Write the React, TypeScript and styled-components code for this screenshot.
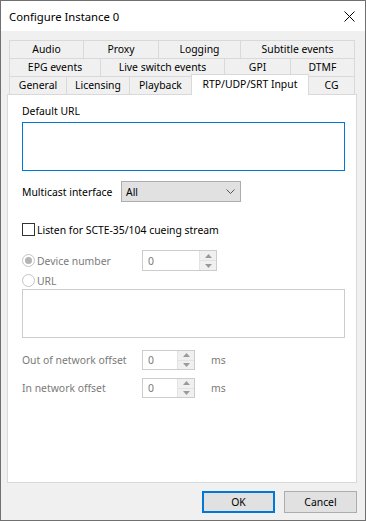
import React from 'react';
import styled, {createGlobalStyle, css} from 'styled-components';

const GlobalStyle = createGlobalStyle`
  html, body {
    margin: 0;
    padding: 0;
  }
  body {
    font-family: "Noto Sans", "Open Sans", sans-serif;
    font-size: 10.4px;
    color: #000;
    background: #fff;
  }
  * {
    box-sizing: border-box;
  }
`

interface TabDef {
    label: string
    width?: number
    active?: boolean
}

const tabRows: TabDef[][] = [
    [{label: 'Audio', width: 75}, {label: 'Proxy', width: 76}, {label: 'Logging', width: 83}, {label: 'Subtitle events'}],
    [{label: 'EPG events', width: 92}, {label: 'Live switch events', width: 125}, {label: 'GPI', width: 67}, {label: 'DTMF'}],
    [{label: 'General', width: 58}, {label: 'Licensing', width: 64}, {label: 'Playback', width: 63}, {label: 'RTP/UDP/SRT Input', width: 118, active: true}, {label: 'CG'}],
]

const SpinArrows = () => (
    <SpinButtons>
        <SpinHalf>
            <svg width="7" height="4" viewBox="0 0 7 4"><path d="M0 4 L3.5 0 L7 4 Z" fill="#9a9a9a"/></svg>
        </SpinHalf>
        <SpinHalf>
            <svg width="7" height="4" viewBox="0 0 7 4"><path d="M0 0 L3.5 4 L7 0 Z" fill="#9a9a9a"/></svg>
        </SpinHalf>
    </SpinButtons>
)

const App: React.FC = () => {
    return (
        <>
            <GlobalStyle/>
            <Window>
                <TitleBar>
                    <span>Configure Instance 0</span>
                    <svg width="11" height="11" viewBox="0 0 11 11">
                        <path d="M0.5 0.5 L10.5 10.5 M10.5 0.5 L0.5 10.5" stroke="#000" strokeWidth="1"/>
                    </svg>
                </TitleBar>
                <Body>
                    <TabStrip>
                        {tabRows.map((row, i) => (
                            <TabRow key={i}>
                                {row.map(t => (
                                    <Tab key={t.label} $width={t.width} $active={t.active}>{t.label}</Tab>
                                ))}
                            </TabRow>
                        ))}
                    </TabStrip>
                    <Panel>
                        <Label>Default URL</Label>
                        <TextBox $focused $gap={4}/>

                        <FieldRow $gap={10} $height={21}>
                            <FieldLabel $w={99}>Multicast interface</FieldLabel>
                            <Combo>
                                <span>All</span>
                                <svg width="9" height="5" viewBox="0 0 9 5">
                                    <path d="M0.5 0.5 L4.5 4.5 L8.5 0.5" stroke="#555" strokeWidth="1" fill="none"/>
                                </svg>
                            </Combo>
                        </FieldRow>

                        <FieldRow $gap={21} $height={13}>
                            <CheckBox/>
                            <OptionText>Listen for SCTE-35/104 cueing stream</OptionText>
                        </FieldRow>

                        <FieldRow $gap={14} $height={21}>
                            <FieldLabel $w={120} $disabled>
                                <Radio $checked/>
                                <OptionText $disabled>Device number</OptionText>
                            </FieldLabel>
                            <SpinBox $w={75}>
                                <SpinValue>0</SpinValue>
                                <SpinArrows/>
                            </SpinBox>
                        </FieldRow>

                        <FieldRow $gap={3} $height={13}>
                            <Radio/>
                            <OptionText $disabled>URL</OptionText>
                        </FieldRow>
                        <TextBox $gap={2}/>

                        <FieldRow $gap={12} $height={20}>
                            <FieldLabel $w={120} $disabled>Out of network offset</FieldLabel>
                            <SpinBox $w={53}>
                                <SpinValue>0</SpinValue>
                                <SpinArrows/>
                            </SpinBox>
                            <Unit>ms</Unit>
                        </FieldRow>

                        <FieldRow $gap={8} $height={20}>
                            <FieldLabel $w={120} $disabled>In network offset</FieldLabel>
                            <SpinBox $w={53}>
                                <SpinValue>0</SpinValue>
                                <SpinArrows/>
                            </SpinBox>
                            <Unit>ms</Unit>
                        </FieldRow>
                    </Panel>
                    <Footer>
                        <DialogButton $default>OK</DialogButton>
                        <DialogButton>Cancel</DialogButton>
                    </Footer>
                </Body>
            </Window>
        </>
    );
};

export default App;


const Window = styled.div`
  width: 366px;
  height: 521px;
  border: 1px solid #707070;
  display: flex;
  flex-direction: column;
  overflow: hidden;
`

const TitleBar = styled.div`
  height: 30px;
  flex: 0 0 30px;
  background: #fff;
  display: flex;
  align-items: center;
  justify-content: space-between;
  padding: 0 10px 0 8px;
  font-size: 11.3px;
`

const Body = styled.div`
  flex: 1;
  background: #f0f0f0;
  padding: 9px 8px 7px 6px;
  display: flex;
  flex-direction: column;
`

const TabStrip = styled.div`
  margin: 0 2px;
  display: flex;
  flex-direction: column;
`

const TabRow = styled.div`
  display: flex;
  height: 18px;
`

const Tab = styled.div<{$width?: number; $active?: boolean}>`
  flex: ${p => p.$width ? `0 0 ${p.$width}px` : '1 1 0'};
  height: 18px;
  margin-left: -1px;
  &:first-child {
    margin-left: 0;
  }
  border: 1px solid #d9d9d9;
  border-bottom: none;
  background: #f0f0f0;
  display: flex;
  align-items: center;
  justify-content: center;
  white-space: nowrap;
  padding-bottom: 1px;
  ${p => p.$active && css`
    position: relative;
    z-index: 1;
    margin-top: -2px;
    height: 21px;
    background: #fff;
    padding-bottom: 2px;
  `}
`

const Panel = styled.div`
  flex: 1;
  background: #fff;
  border: 1px solid #d9d9d9;
  padding: 9px 11px 0 14px;
  display: flex;
  flex-direction: column;
`

const Label = styled.div`
  height: 14px;
  line-height: 14px;
`

const TextBox = styled.div<{$focused?: boolean; $gap: number}>`
  height: 49px;
  margin-top: ${p => p.$gap}px;
  border: 1px solid ${p => p.$focused ? '#0078d7' : '#cccccc'};
  background: #fff;
`

const FieldRow = styled.div<{$gap: number; $height: number}>`
  display: flex;
  align-items: center;
  height: ${p => p.$height}px;
  margin-top: ${p => p.$gap}px;
`

const FieldLabel = styled.div<{$w: number; $disabled?: boolean}>`
  flex: 0 0 ${p => p.$w}px;
  display: flex;
  align-items: center;
  color: ${p => p.$disabled ? '#7a7a7a' : '#000'};
  white-space: nowrap;
`

const Combo = styled.div`
  width: 120px;
  height: 21px;
  background: #e1e1e1;
  border: 1px solid #adadad;
  display: flex;
  align-items: center;
  justify-content: space-between;
  padding: 0 5px 0 4px;
`

const CheckBox = styled.div`
  width: 13px;
  height: 13px;
  border: 1px solid #333;
  background: #fff;
`

const Radio = styled.div<{$checked?: boolean}>`
  width: 13px;
  height: 13px;
  border-radius: 50%;
  border: 1px solid #c4c4c4;
  background: #fff;
  display: flex;
  align-items: center;
  justify-content: center;
  &::after {
    content: '';
    display: ${p => p.$checked ? 'block' : 'none'};
    width: 7px;
    height: 7px;
    border-radius: 50%;
    background: #b4b4b4;
  }
`

const OptionText = styled.span<{$disabled?: boolean}>`
  margin-left: 2px;
  color: ${p => p.$disabled ? '#7a7a7a' : '#000'};
  white-space: nowrap;
`

const SpinBox = styled.div<{$w: number}>`
  width: ${p => p.$w}px;
  height: 100%;
  border: 1px solid #cccccc;
  background: #fff;
  display: flex;
`

const SpinValue = styled.div`
  flex: 1;
  display: flex;
  align-items: center;
  padding-left: 5px;
  color: #7a7a7a;
`

const SpinButtons = styled.div`
  width: 17px;
  display: flex;
  flex-direction: column;
  border-left: 1px solid #e3e3e3;
  background: #f0f0f0;
`

const SpinHalf = styled.div`
  flex: 1;
  display: flex;
  align-items: center;
  justify-content: center;
  &:first-child {
    border-bottom: 1px solid #e3e3e3;
  }
`

const Unit = styled.span`
  margin-left: 16px;
  color: #7a7a7a;
`

const Footer = styled.div`
  display: flex;
  justify-content: flex-end;
  gap: 9px;
  margin-top: 8px;
`

const DialogButton = styled.div<{$default?: boolean}>`
  width: 73px;
  height: 22px;
  background: #e1e1e1;
  border: ${p => p.$default ? '2px solid #0078d7' : '1px solid #adadad'};
  display: flex;
  align-items: center;
  justify-content: center;
`
